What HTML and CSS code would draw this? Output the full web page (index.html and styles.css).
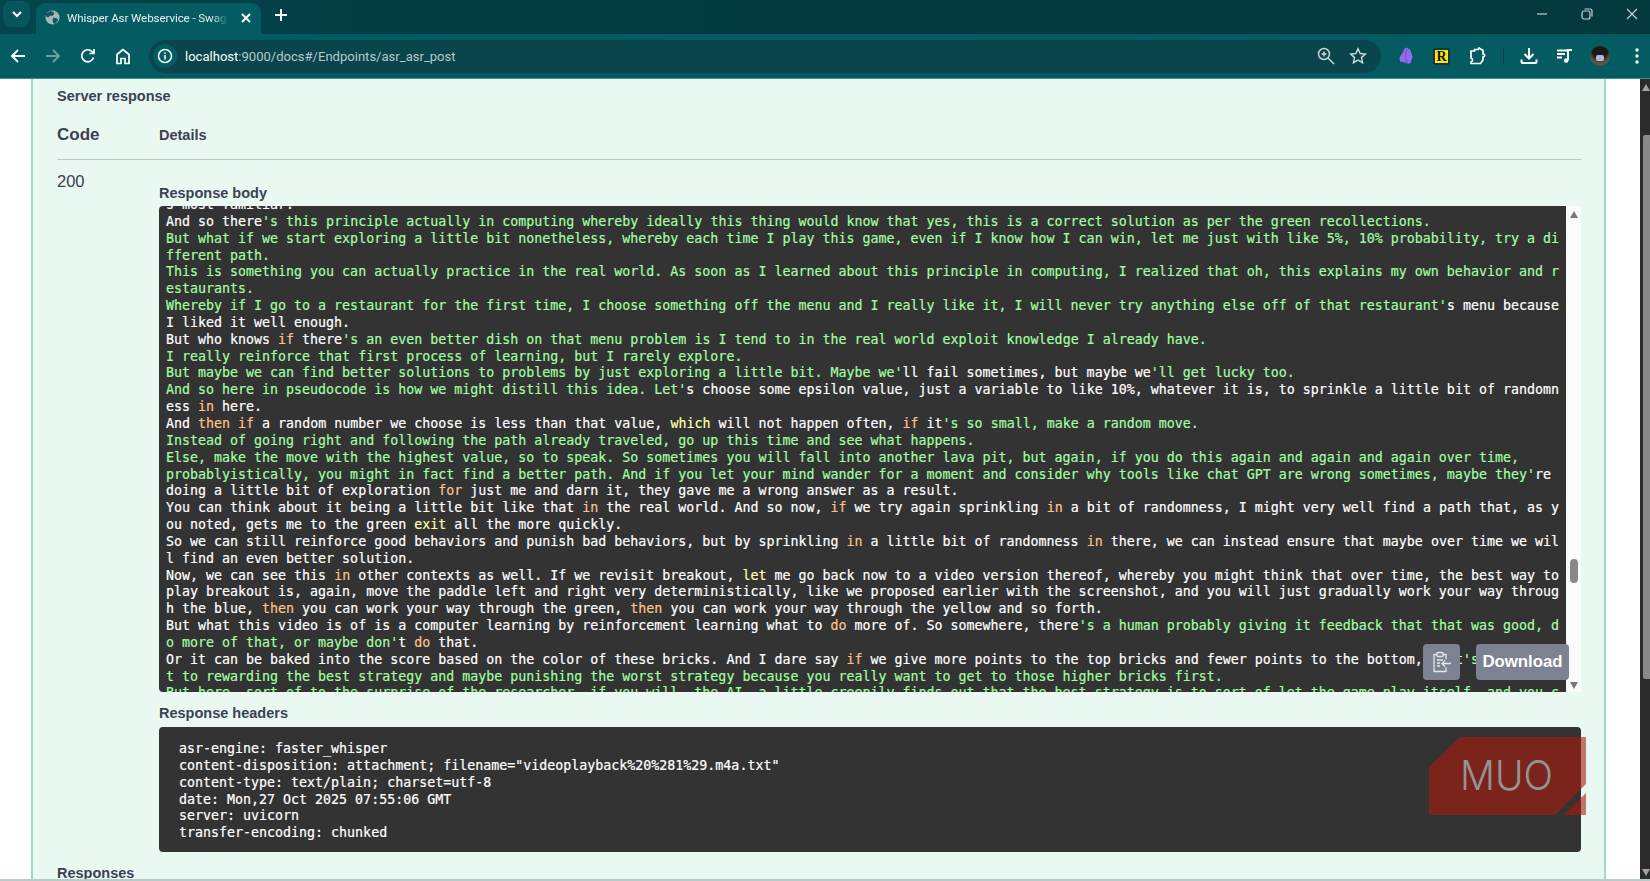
FILE: index.html
```
<!DOCTYPE html>
<html lang="en">
<head>
<meta charset="utf-8">
<title>Whisper Asr Webservice - Swagger UI</title>
<link rel="stylesheet" href="styles.css">
</head>
<body>
<div class="window">
  <header class="tabstrip">
    <button class="tabsearch"><svg width="12" height="12" viewBox="0 0 12 12"><path d="M2 4l4 4 4-4" class="st2"/></svg></button>
    <div class="tab">
      <svg class="favicon" width="15" height="15" viewBox="0 0 16 16"><circle cx="8" cy="8" r="7.5" fill="#a9b6b8"/><path d="M6 1l3 1 1 2-2 2-3 0-1 2-3-1 0-3zM9 8l4 1 1 2-3 4-2-1-1-3z" fill="#0a5a60"/></svg>
      <span class="tabtitle">Whisper Asr Webservice - Swagger UI</span>
      <svg class="tabclose" width="12" height="12" viewBox="0 0 12 12"><path d="M2 2l8 8M10 2l-8 8" class="st2"/></svg>
    </div>
    <svg class="newtab" width="14" height="14" viewBox="0 0 14 14"><path d="M7 1v12M1 7h12" class="st2"/></svg>
    <div class="winctl">
      <svg width="12" height="12" viewBox="0 0 12 12"><path d="M1 6h10" class="st1g"/></svg>
      <svg width="12" height="12" viewBox="0 0 12 12"><rect x="1" y="3" width="8" height="8" rx="2" class="st1g"/><path d="M3.5 1h5.500a2 2 0 0 1 2 2v5.500" class="st1g"/></svg>
      <svg width="12" height="12" viewBox="0 0 12 12"><path d="M1 1l10 10M11 1L1 11" class="st1g"/></svg>
    </div>
  </header>
  <nav class="toolbar">
    <button class="tbtn"><svg width="16" height="16" viewBox="0 0 16 16"><path d="M15 8H2M8 2L2 8l6 6" class="st2"/></svg></button>
    <button class="tbtn"><svg width="16" height="16" viewBox="0 0 16 16"><path d="M1 8h13M8 2l6 6-6 6" class="st2 dim"/></svg></button>
    <button class="tbtn"><svg width="16" height="16" viewBox="0 0 16 16"><path d="M13.500 9.500A6 6 0 1 1 12 3.500L14 5.500M14 1v4.500H9.500" class="st18"/></svg></button>
    <button class="tbtn"><svg width="16" height="17" viewBox="0 0 16 17"><path d="M8 1.500L2 6.500V15.500H6V10.500H10V15.500H14V6.500z" class="st18"/></svg></button>
    <div class="omnibox">
      <span class="siteinfo"><svg width="16" height="16" viewBox="0 0 16 16"><circle cx="8" cy="8" r="6.500" class="st15"/><path d="M8 7v4.500M8 4.200v1.600" class="st15"/></svg></span>
      <span class="url"><span class="host">localhost</span>:9000/docs#/Endpoints/asr_asr_post</span>
      <svg class="omni-icon" width="18" height="18" viewBox="0 0 18 18"><circle cx="7" cy="7" r="5.500" class="st15 soft"/><path d="M11 11l6 6M4.500 7h5M7 4.500v5" class="st15 soft"/></svg>
      <svg class="omni-icon star" width="18" height="18" viewBox="0 0 18 18"><path d="M9 1.800l2.200 4.700 5.100.6-3.800 3.500 1 5.100L9 13.200l-4.500 2.500 1-5.100L1.700 7.100l5.100-.6z" class="st15 soft"/></svg>
    </div>
    <button class="ext"><svg width="14" height="18" viewBox="0 0 14 18"><path d="M7.500 0.500L11.500 3 13.500 9.500 12 15.500 9 17 6 15.500 1 14.500 0.500 10.500 4 5 5 2z" fill="#8f6bef"/><path d="M7.500 2L6 10 9 17" stroke="#6d4fc9" fill="none"/></svg></button>
    <button class="ext ext-r"><span class="rbadge">R</span></button>
    <button class="ext"><svg width="18" height="18" viewBox="0 0 18 18"><path d="M2 4h3.500V2.500h3.500L10 1l4 2.500v3.500c2 0 2.500 2.500 0 3v3l-2.500 3.500H2v-1.500c2-.5 2-3.500 0-4z" class="st18" /></svg></button>
    <span class="tdiv"></span>
    <button class="ext"><svg width="18" height="18" viewBox="0 0 18 18"><path d="M9 1v10M4.500 7L9 11.500 13.500 7M1.500 12.500v2.500a1 1 0 0 0 1 1h13a1 1 0 0 0 1-1v-2.500" class="st2"/></svg></button>
    <button class="ext"><svg width="16" height="16" viewBox="0 0 16 16"><path d="M0 2.500h10M0 6h8M0 9.500h5" class="st15w"/><path d="M11 12V2h4" class="st15w"/><circle cx="9.200" cy="12.500" r="2.300" fill="#fff"/></svg></button>
    <button class="ext ext-avatar"><span class="avatar"><span class="mask"></span></span></button>
    <button class="ext"><svg width="4" height="16" viewBox="0 0 4 16"><circle cx="2" cy="2" r="1.700" fill="#fff"/><circle cx="2" cy="8" r="1.700" fill="#fff"/><circle cx="2" cy="14" r="1.700" fill="#fff"/></svg></button>
  </nav>
  <div class="viewport">
    <main class="page">
      <section class="card">
        <h4 class="h-server">Server response</h4>
        <div class="head-row">
          <span class="h-code">Code</span>
          <span class="h-details">Details</span>
        </div>
        <div class="resp-row">
          <div class="status">200</div>
          <div class="detail">
            <h5 class="label">Response body</h5>
            <div class="bodybox">
              <div class="codearea"><pre class="code body-code">s most familiar.
And so there<span class="s">'s this principle actually in computing whereby ideally this thing would know that yes, this is a correct solution as per the green recollections.
But what if we start exploring a little bit nonetheless, whereby each time I play this game, even if I know how I can win, let me just with like 5%, 10% probability, try a di
fferent path.
This is something you can actually practice in the real world. As soon as I learned about this principle in computing, I realized that oh, this explains my own behavior and r
estaurants.
Whereby if I go to a restaurant for the first time, I choose something off the menu and I really like it, I will never try anything else off of that restaurant'</span>s menu because
I liked it well enough.
But who knows <span class="k">if</span> there<span class="s">'s an even better dish on that menu problem is I tend to in the real world exploit knowledge I already have.
I really reinforce that first process of learning, but I rarely explore.
But maybe we can find better solutions to problems by just exploring a little bit. Maybe we'</span>ll fail sometimes, but maybe we<span class="s">'ll get lucky too.
And so here in pseudocode is how we might distill this idea. Let'</span>s choose some epsilon value, just a variable to like 10%, whatever it is, to sprinkle a little bit of randomn
ess <span class="k">in</span> here.
And <span class="k">then</span> <span class="k">if</span> a random number we choose is less than that value, <span class="b">which</span> will not happen often, <span class="k">if</span> it<span class="s">'s so small, make a random move.
Instead of going right and following the path already traveled, go up this time and see what happens.
Else, make the move with the highest value, so to speak. So sometimes you will fall into another lava pit, but again, if you do this again and again and again over time,
probablyistically, you might in fact find a better path. And if you let your mind wander for a moment and consider why tools like chat GPT are wrong sometimes, maybe they'</span>re
doing a little bit of exploration <span class="k">for</span> just me and darn it, they gave me a wrong answer as a result.
You can think about it being a little bit like that <span class="k">in</span> the real world. And so now, <span class="k">if</span> we try again sprinkling <span class="k">in</span> a bit of randomness, I might very well find a path that, as y
ou noted, gets me to the green <span class="b">exit</span> all the more quickly.
So we can still reinforce good behaviors and punish bad behaviors, but by sprinkling <span class="k">in</span> a little bit of randomness <span class="k">in</span> there, we can instead ensure that maybe over time we wil
l find an even better solution.
Now, we can see this <span class="k">in</span> other contexts as well. If we revisit breakout, <span class="b">let</span> me go back now to a video version thereof, whereby you might think that over time, the best way to
play breakout is, again, move the paddle left and right very deterministically, like we proposed earlier with the screenshot, and you will just gradually work your way throug
h the blue, <span class="k">then</span> you can work your way through the green, <span class="k">then</span> you can work your way through the yellow and so forth.
But what this video is of is a computer learning by reinforcement learning what to <span class="k">do</span> more of. So somewhere, there<span class="s">'s a human probably giving it feedback that that was good, d
o more of that, or maybe don'</span>t <span class="k">do</span> that.
Or it can be baked into the score based on the color of these bricks. And I dare say <span class="k">if</span> we give more points to the top bricks and fewer points to the bottom, that<span class="s">'s just ge
t to rewarding the best strategy and maybe punishing the worst strategy because you really want to get to those higher bricks first.
But here, sort of to the surprise of the researcher, if you will, the AI, a little creepily finds out that the best strategy is to sort of let the game play itself, and you c</span></pre></div>
              <div class="innerbar">
                <span class="arrow-up"></span>
                <span class="innerthumb"></span>
                <span class="arrow-down"></span>
              </div>
              <div class="actions">
                <button class="copybtn"><svg width="20" height="22" viewBox="0 0 20 22"><path d="M5 3.500H2v17h12v-4M11 3.500h3v5" class="st13 pale"/><rect x="5" y="1.500" width="6" height="4" rx="1" class="st13 pale"/><path d="M5 9h6M5 12h3M5 15h3" class="st13 pale"/><path d="M19 12.500H10M13 9.500l-3 3 3 3" class="st13 pale"/></svg></button>
                <button class="dlbtn">Download</button>
              </div>
            </div>
            <h5 class="label label-headers">Response headers</h5>
            <pre class="code headers-code">asr-engine: faster_whisper
content-disposition: attachment; filename="videoplayback%20%281%29.m4a.txt"
content-type: text/plain; charset=utf-8
date: Mon,27 Oct 2025 07:55:06 GMT
server: uvicorn
transfer-encoding: chunked</pre>
          </div>
        </div>
        <h4 class="h-responses">Responses</h4>
      </section>
    </main>
    <aside class="pagebar">
      <span class="pb-up"></span>
      <span class="pb-thumb"></span>
      <span class="pb-down"></span>
    </aside>
    <svg class="muo" width="158" height="79" viewBox="0 0 158 79">
      <path d="M0 30L31 0H157V47L126 78H0z" class="muo-fill"/>
      <path d="M134 78L157 56V78z" class="muo-fill"/>
      <text x="31" y="53" textLength="93" lengthAdjust="spacingAndGlyphs" class="muo-text">MUO</text>
    </svg>
    <div class="winbottom"></div>
  </div>
</div>
</body>
</html>
```
FILE: styles.css
```
* { box-sizing: border-box; }
html, body { margin: 0; height: 100%; overflow: hidden; }
body { font-family: "Liberation Sans", Arial, sans-serif; color: #3b4151; background: #fff; }
button { border: 0; padding: 0; background: none; font: inherit; }
h4, h5, pre { margin: 0; }
svg { display: block; }

.st2 { fill: none; stroke: #fff; stroke-width: 2; }
.st18 { fill: none; stroke: #fff; stroke-width: 1.7; }
.st15 { fill: none; stroke: #fff; stroke-width: 1.5; }
.st13 { fill: none; stroke: #fff; stroke-width: 1.3; }
.st15w { fill: none; stroke: #fff; stroke-width: 2; }
.st1g { fill: none; stroke: #c7d2d3; stroke-width: 1.2; }
.dim { stroke: #6f9ea2; }
.soft { stroke: #c9d6d7; }
.pale { stroke: #e4e6ea; }

.window { display: flex; flex-direction: column; height: 881px; width: 1650px; }

.tabstrip { height: 34px; background: linear-gradient(90deg, #04454c 0, #033b42 30%, #02383e 100%); display: flex; align-items: flex-start; flex: none; }
.tabsearch { width: 27px; height: 26px; margin: 1px 6px 0 3px; border-radius: 8px; background: #08555b; display: flex; align-items: center; justify-content: center; }
.tab { width: 225px; height: 31px; margin-top: 3px; background: #045c62; border-radius: 9px 9px 0 0; display: flex; align-items: center; padding: 0 9px 2px 9px; color: #e6f1f1; font-family: Roboto, "Noto Sans", sans-serif; font-size: 11.6px; letter-spacing: -.1px; }
.favicon { flex: none; margin: 0 7px 0 0; }
.tabtitle { flex: 1; min-width: 0; overflow: hidden; white-space: nowrap; -webkit-mask-image: linear-gradient(90deg, #000 90%, transparent 100%); mask-image: linear-gradient(90deg, #000 90%, transparent 100%); }
.tabclose { flex: none; margin-left: 12px; }
.newtab { margin: 8px 0 0 13px; flex: none; }
.winctl { margin-left: auto; display: flex; margin-top: 8px; padding-right: 12px; gap: 33px; }

.toolbar { height: 45px; flex: none; background: #045c62; display: flex; align-items: center; border-bottom: 1px solid #3d8f8e; }
.tbtn { width: 35px; height: 34px; display: flex; align-items: center; justify-content: center; flex: none; }
.omnibox { width: 1232px; height: 33px; margin: 0 7px 0 9px; flex: none; border-radius: 17px; background: #0a444c; display: flex; align-items: center; padding: 0 14px 0 4px; }
.siteinfo { width: 24px; height: 24px; border-radius: 50%; background: #045c62; display: flex; align-items: center; justify-content: center; flex: none; }
.url { margin-left: 8px; flex: 1; font-family: Roboto, "Noto Sans", sans-serif; font-size: 13.05px; color: #b4cbcd; white-space: nowrap; }
.host { color: #fff; }
.omni-icon { flex: none; }
.star { margin-left: 14px; }
.ext { width: 36px; height: 34px; flex: none; display: flex; align-items: center; justify-content: center; }
.ext-r { padding-right: 1px; }
.ext-avatar { padding-right: 3px; }
.rbadge { width: 17px; height: 17px; background: #ffe600; border: 2px solid #16353a; border-radius: 2px; font-family: "Liberation Serif", serif; font-weight: 700; font-size: 14px; line-height: 13px; color: #111; text-align: center; display: block; }
.tdiv { width: 1px; height: 16px; background: #0a3d43; margin: 0 7px; flex: none; }
.avatar { width: 20px; height: 20px; border-radius: 50%; background: radial-gradient(circle at 50% 25%, #1d1613 0 38%, #5b4f47 62%, #6f5e55 100%); display: flex; align-items: flex-end; justify-content: center; overflow: hidden; }
.mask { width: 8px; height: 6px; background: #a9c0c9; border-radius: 2px; margin-bottom: 5px; }

.viewport { flex: 1; min-height: 0; display: flex; position: relative; overflow: hidden; }
.page { width: 1640px; flex: none; padding-left: 31px; background: #fff; overflow: hidden; }
.card { width: 1575px; min-height: 801px; background: #e9f9f2; border-left: 2px solid #9edcc2; border-right: 2px solid #9edcc2; padding: 7px 23px 0 24px; }
.h-server { font-size: 14.5px; line-height: 20px; font-weight: 700; }
.head-row { display: flex; align-items: center; height: 20px; margin-top: 19px; }
.h-code { width: 102px; font-size: 17px; font-weight: 700; }
.h-details { font-size: 14.5px; font-weight: 700; }
.resp-row { display: flex; margin-top: 14px; border-top: 1px solid #b7cbc6; }
.status { width: 102px; flex: none; padding-top: 11px; font-size: 16.500px; line-height: 20px; }
.detail { width: 1422px; padding-top: 23px; flex: none; }
.label { font-size: 14.5px; line-height: 20px; font-weight: 700; }
.label-headers { margin-top: 11px; }

.bodybox { position: relative; display: flex; height: 486px; margin-top: 3px; }
.codearea { width: 1407px; height: 100%; flex: none; background: #333; border-radius: 4px 0 0 4px; overflow: hidden; padding-left: 7px; }
.code { font-family: "DejaVu Sans Mono", "Liberation Mono", monospace; font-size: 13.31px; line-height: 16.84px; color: #fff; white-space: pre; -webkit-text-stroke: .2px currentColor; }
.body-code { margin-top: -9px; }
.s { color: #a2fca2; }
.k { color: #fcc28c; }
.b { color: #ffffaa; }
.innerbar { width: 15px; flex: none; background: #fbfbfb; display: flex; flex-direction: column; align-items: center; padding-top: 5px; }
.arrow-up { border: 4px solid transparent; border-top: 0; border-bottom: 7px solid #777; }
.arrow-down { border: 4px solid transparent; border-bottom: 0; border-top: 7px solid #777; margin-top: 99px; }
.innerthumb { width: 8px; height: 24px; border-radius: 4px; background: #888; margin-top: 341px; }
.actions { position: absolute; right: 12px; bottom: 12px; display: flex; gap: 16px; }
.copybtn { width: 37px; height: 36px; background: #7d8293; border-radius: 4px; display: flex; align-items: center; justify-content: center; }
.dlbtn { width: 93px; height: 36px; background: #7d8293; border-radius: 4px; color: #fff; font-weight: 700; font-size: 16.8px; }
.headers-code { background: #333; height: 125px; border-radius: 4px; margin-top: 4px; padding: 14px 20px; }
.h-responses { font-size: 14.5px; line-height: 20px; font-weight: 700; margin-top: 11px; }

.pagebar { width: 10px; flex: none; background: #2b2b2b; display: flex; flex-direction: column; align-items: flex-end; padding-top: 5px; }
.pb-up { border: 4px solid transparent; border-top: 0; border-bottom: 7px solid #a3a3a3; }
.pb-thumb { width: 7px; height: 544px; margin-top: 44px; background: #8a8a8a; border-radius: 2px 0 0 2px; }
.pb-down { border: 4px solid transparent; border-bottom: 0; border-top: 7px solid #a3a3a3; margin-top: 190px; }

.muo { position: absolute; left: 1429px; top: 658px; }
.muo-fill { fill: rgba(172, 27, 12, .6); }
.muo-text { font-family: Inter, "Liberation Sans", sans-serif; font-size: 41px; font-weight: 300; fill: #949494; }
.winbottom { position: absolute; left: 0; right: 0; bottom: 0; height: 2px; background: #b9cbc7; }
```
